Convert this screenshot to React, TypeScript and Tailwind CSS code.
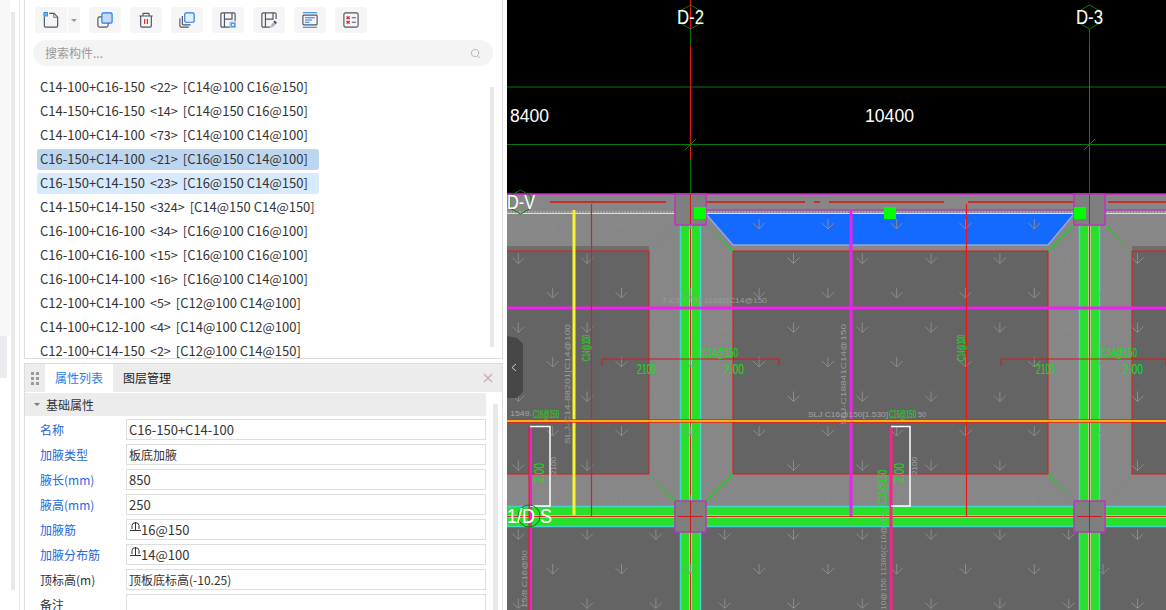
import React from "react";
import { Search } from "lucide-react";

const FONT = "font-['Noto_Sans_CJK_SC','Noto_Sans',sans-serif]";

const rows = [
  ["C14-100+C16-150", "<22>", "[C14@100 C16@150]"],
  ["C14-150+C16-150", "<14>", "[C14@150 C16@150]"],
  ["C14-100+C14-100", "<73>", "[C14@100 C14@100]"],
  ["C16-150+C14-100", "<21>", "[C16@150 C14@100]"],
  ["C16-150+C14-150", "<23>", "[C16@150 C14@150]"],
  ["C14-150+C14-150", "<324>", "[C14@150 C14@150]"],
  ["C16-100+C16-100", "<34>", "[C16@100 C16@100]"],
  ["C16-100+C16-100", "<15>", "[C16@100 C16@100]"],
  ["C16-100+C14-100", "<16>", "[C16@100 C14@100]"],
  ["C12-100+C14-100", "<5>", "[C12@100 C14@100]"],
  ["C14-100+C12-100", "<4>", "[C14@100 C12@100]"],
  ["C12-100+C14-150", "<2>", "[C12@100 C14@150]"],
];

const props: { label: string; value: string; rebar?: boolean; plain?: boolean; zh?: boolean }[] = [
  { label: "名称", value: "C16-150+C14-100" },
  { label: "加腋类型", value: "板底加腋", zh: true },
  { label: "腋长(mm)", value: "850" },
  { label: "腋高(mm)", value: "250" },
  { label: "加腋筋", value: "16@150", rebar: true },
  { label: "加腋分布筋", value: "14@100", rebar: true },
  { label: "顶标高(m)", value: "顶板底标高(-10.25)", plain: true, zh: true },
  { label: "备注", value: "", plain: true },
];

function Ico({ children }: { children: React.ReactNode }) {
  return (
    <svg width="16" height="16" viewBox="0 0 18 18" fill="none" stroke="#4d5566" strokeWidth="1.3">
      {children}
    </svg>
  );
}

const icons = [
  // copy
  <Ico key="a">
    <rect x="1" y="5.5" width="11.500" height="11.500" rx="2" />
    <rect x="5.500" y="1" width="11.500" height="11.500" rx="1.500" fill="#c5d9f3" stroke="#1c7cf0" />
  </Ico>,
  // delete
  <Ico key="b">
    <path d="M1.500 4.500h15M5.500 4.500V2.500a1 1 0 0 1 1-1h5a1 1 0 0 1 1 1v2M3 4.500v11a1.500 1.500 0 0 0 1.500 1.500h9a1.500 1.500 0 0 0 1.500-1.500v-11" />
    <path d="M7.500 8v5.500M10.500 8v5.500" stroke="#e02020" />
  </Ico>,
  // stacked
  <Ico key="c">
    <path d="M1 7v8.500a1.500 1.500 0 0 0 1.500 1.500H11" />
    <path d="M3.800 4.500v9a1 1 0 0 0 1 1H13" />
    <rect x="6.500" y="1" width="10.500" height="10.500" rx="1.500" fill="#e6f0fb" stroke="#1c7cf0" />
  </Ico>,
  // save to
  <Ico key="d">
    <path d="M11 17H2.500A1.500 1.500 0 0 1 1 15.500v-13A1.500 1.500 0 0 1 2.500 1h13A1.500 1.500 0 0 1 17 2.500V10" />
    <path d="M5 1v16M5 8h8.500V1" />
    <rect x="11.500" y="11.500" width="6" height="6" fill="#5a9df0" stroke="#8fbdf5" />
    <rect x="13.500" y="13.500" width="2" height="2" fill="#fff" stroke="none" />
  </Ico>,
  // pick
  <Ico key="e">
    <path d="M10 17H2.500A1.500 1.500 0 0 1 1 15.500v-13A1.500 1.500 0 0 1 2.500 1h13A1.500 1.500 0 0 1 17 2.500V8" />
    <path d="M5 1v16M5 8h8.500V1" />
    <path d="M10.500 17.500l1-3 3-3 2 2-3 3z" fill="#a9aeb9" stroke="#c5c9d1" strokeWidth="1" />
    <path d="M14 11l1.500-1.500 2.500 2.500-1.500 1.500z" fill="#3d4452" stroke="none" />
  </Ico>,
  // list
  <Ico key="f">
    <path d="M1 0.800h16M1 17.200h16" stroke="#1c7cf0" />
    <rect x="1" y="3.500" width="16" height="11" rx="1" />
    <path d="M3.500 6.500h11M3.500 9h8M3.500 11.500h5" stroke="#1c7cf0" />
  </Ico>,
  // errors
  <Ico key="g">
    <rect x="1" y="1" width="16" height="16" rx="2" />
    <path d="M4 5l3.500 3M7.500 5L4 8M4 10l3.500 3M7.500 10L4 13" stroke="#e02020" strokeWidth="1.500" />
    <path d="M10 6.500h4.500M10 11.500h4.500" />
  </Ico>,
];

function NewIcon() {
  return (
    <svg width="16" height="16" viewBox="0 0 18 18" fill="none">
      <path d="M1.500 5v10.500A1.500 1.500 0 0 0 3 17h12a1.500 1.500 0 0 0 1.500-1.500V6l-4-4.500H7" stroke="#4d5566" strokeWidth="1.300" />
      <path d="M12 1.500v4.500h4.500z" fill="#dfe2e8" stroke="#4d5566" strokeWidth="0.800" />
      <rect x="0.500" y="0" width="5" height="5" fill="#2f7fe6" />
      <path d="M1.500 1h1v1h-1zM3.500 1h1v1h-1zM2.500 2h1v1h-1zM1.500 3h1v1h-1zM3.500 3h1v1h-1z" fill="#cfe3fb" />
    </svg>
  );
}

function RebarMark() {
  return (
    <svg width="13" height="13" viewBox="0 0 13 13" fill="none" stroke="#333" strokeWidth="1" className="mt-[-5px] mr-[-1px]">
      <path d="M1 9.500h11M6.500 1v8.500M3 8V4.500a3.500 2.800 0 0 1 7 0V8" />
    </svg>
  );
}

function Arrows() {
  const out: React.ReactNode[] = [];
  for (let r = 0; r < 12; r++) {
    const y = 224 + r * 34.5;
    const x0 = r % 2 === 0 ? 552.7 : 518.3;
    for (let x = x0; x < 1170; x += 68.8) {
      out.push(<path key={`${r}-${x}`} d={`M${x} ${y - 5}v10M${x - 6} ${y - 1}l6 6l6-6`} />);
    }
  }
  return (
    <g stroke="#8c8c8c" strokeWidth="1" fill="none">
      {out}
    </g>
  );
}

function Hex({ cx, cy, r }: { cx: number; cy: number; r: number }) {
  const h = r * 0.87;
  return (
    <path
      d={`M${cx} ${cy - r}L${cx + h} ${cy - r / 2}V${cy + r / 2}L${cx} ${cy + r}L${cx - h} ${cy + r / 2}V${cy - r / 2}Z`}
      fill="none"
      stroke="#0a7a0a"
      strokeWidth="1"
    />
  );
}

function Beam({ x }: { x: number }) {
  return (
    <g>
      <rect x={x} y={224} width={21} height={386} fill="#2adf2a" />
      <path d={`M${x + 0.5} 224V610M${x + 20.5} 224V610`} stroke="#3fd8c8" strokeWidth="1.500" />
      <path d={`M${x + 10.5} 224V610`} stroke="#f0c0b0" strokeWidth="2.500" />
      <path d={`M${x + 10.5} 224V610`} stroke="#e02020" strokeWidth="1" />
    </g>
  );
}

function Column({ x, y }: { x: number; y: number }) {
  return <rect x={x} y={y} width={31} height={31} fill="#7f7f7f" stroke="#c030c0" strokeWidth="1.500" />;
}

function Dim({ x, end }: { x: number; end: number }) {
  return (
    <g>
      <path d={`M${x} 366v-7H${end}v7`} stroke="#d01818" fill="none" />
      <text x={x + 100} y={357} fontSize="13" fill="#12e012" textLength={36} lengthAdjust="spacingAndGlyphs">C14@150</text>
      <text x={x + 35} y={374} fontSize="15" fill="#12e012" textLength={19} lengthAdjust="spacingAndGlyphs">2100</text>
      <text x={x + 122} y={374} fontSize="15" fill="#12e012" textLength={20} lengthAdjust="spacingAndGlyphs">2.00</text>
    </g>
  );
}

function Vtext({ x, y, len, size, fill, children }: { x: number; y: number; len: number; size: number; fill: string; children: string }) {
  return (
    <text transform={`translate(${x} ${y}) rotate(-90)`} fontSize={size} fill={fill} textLength={len} lengthAdjust="spacingAndGlyphs">
      {children}
    </text>
  );
}

function Canvas() {
  return (
    <svg width="659" height="610" viewBox="507 0 659 610" className="block font-['Liberation_Sans',sans-serif]">
      <rect x="507" y="0" width="659" height="610" fill="#000" />

      {/* axes */}
      <path d="M507 87H1166" stroke="#065006" strokeWidth="1.500" />
      <path d="M507 144.500H1166" stroke="#067a06" />
      <path d="M690.500 0V160M1089.500 45V160" stroke="#e01818" />
      <path d="M690.500 29V45M690.500 160V194M1089.500 29V45M1089.500 160V194" stroke="#087008" />
      <path d="M685 150l11-11M1084 150l11-11" stroke="#0a8a0a" />
      <Hex cx={690.500} cy={17} r={12} />
      <Hex cx={1089.500} cy={17} r={12} />
      <text x={677} y={24} fontSize="20" fill="#fff" textLength={27} lengthAdjust="spacingAndGlyphs">D-2</text>
      <text x={1076} y={24} fontSize="20" fill="#fff" textLength={27} lengthAdjust="spacingAndGlyphs">D-3</text>
      <text x={510} y={122} fontSize="18" fill="#fff" textLength={39} lengthAdjust="spacingAndGlyphs">8400</text>
      <text x={865} y={122} fontSize="18" fill="#fff" textLength={49} lengthAdjust="spacingAndGlyphs">10400</text>

      {/* slab */}
      <rect x="507" y="194" width="659" height="416" fill="#878787" />
      <rect x="507" y="246" width="142" height="5" fill="#6e6e6e" />
      <rect x="1132" y="246" width="34" height="5" fill="#6e6e6e" />
      <rect x="507" y="251" width="142" height="223" fill="#646464" />
      <rect x="733" y="251" width="315" height="223" fill="#646464" />
      <rect x="1132" y="251" width="34" height="223" fill="#646464" />
      <rect x="507" y="527" width="659" height="83" fill="#646464" />
      <path d="M706 214H1074L1048 245H733Z" fill="#1469ff" />
      <path d="M706 214L733 245H1048L1074 214" fill="none" stroke="#8fa8e0" strokeWidth="1.500" />

      {/* beams */}
      <Beam x={680} />
      <Beam x={1079} />
      <rect x="507" y="506" width="659" height="21" fill="#2adf2a" />
      <path d="M507 506.500H1166M507 526.500H1166" stroke="#3fd8c8" strokeWidth="1.500" />
      <path d="M507 516.500H1166" stroke="#f0c0b0" strokeWidth="2.500" />
      <path d="M507 516.500H1166" stroke="#e02020" />

      <Arrows />

      {/* top band */}
      <path d="M550 202H666M690 202H805M814 202H820M829 202H944M968 202H1073M1108 202H1166" stroke="#c43030" strokeWidth="2" />
      <path d="M507 194H1166" stroke="#d81fd8" strokeWidth="1.500" />
      <path d="M675 210H1166" stroke="#b040b0" strokeWidth="1.500" />
      <path d="M507 212H1166" stroke="#bbb" strokeDasharray="2 1" />
      <path d="M507 213.500H1166" stroke="#f0f040" />
      <Column x={675} y={194} />
      <Column x={1074} y={194} />
      <Column x={675} y={501} />
      <Column x={1074} y={501} />
      <path d="M690.500 194V224M1089.500 194V224M690.500 501V532M1089.500 501V532M678 516.500H703M1077 516.500H1102" stroke="#d01818" />

      {/* chamfers */}
      <path d="M675 225L649 251M706 225L733 251M1074 225L1048 251M1105 225L1132 251M649 474L675 501M733 474L706 501M1048 474L1074 501M1132 474L1105 501" stroke="#18d018" />

      {/* slab lines */}
      <path d="M507 251H649M733 251H1048M1132 251H1166M507 474H649M733 474H1048M1132 474H1166M649 251V474M733 251V474M1048 251V474M1132 251V474" stroke="#e01818" />
      <path d="M507 308H1166" stroke="#f020f0" strokeWidth="3" />
      <rect x="572.500" y="210" width="3" height="305" fill="#f4f430" />
      <path d="M591.500 204V516M966.500 204V516" stroke="#f01414" strokeWidth="1.200" />
      <rect x="849.500" y="210" width="3" height="306" fill="#f020f0" />
      <path d="M507 421H1166" stroke="#f02010" strokeWidth="3.500" />
      <path d="M507 421H1166" stroke="#ffe010" strokeWidth="1.500" />
      <rect x="529" y="427" width="3" height="183" fill="#f020d0" />
      <path d="M529 427V610" stroke="#e01818" />
      <rect x="889.500" y="427" width="3" height="183" fill="#ff1f8f" />
      <path d="M530 426.500H550V506H530M891 426.500H910V506H891" fill="none" stroke="#fff" strokeWidth="1.500" />

      {/* grips */}
      <rect x="694" y="207" width="12" height="12" fill="#00ff00" />
      <rect x="884" y="207" width="12" height="12" fill="#00ff00" />
      <rect x="1074" y="207" width="12" height="12" fill="#00ff00" />

      {/* dims and labels */}
      <Dim x={602} end={779} />
      <Dim x={1001} end={1166} />
      <Vtext x={590} y={361} len={26} size={11} fill="#12e012">C14@100</Vtext>
      <Vtext x={965} y={361} len={26} size={11} fill="#12e012">C14@100</Vtext>
      <text x={662} y={303} fontSize="8" fill="#9c9c9c" textLength={105} lengthAdjust="spacingAndGlyphs">T-C14-150 11885[C14@150</text>
      <Vtext x={570} y={444} len={120} size={8} fill="#9c9c9c">SLJ-C14-88201[C14@100</Vtext>
      <Vtext x={846} y={425} len={101} size={8} fill="#9c9c9c">SLJ-C18841C14@150</Vtext>
      <text x={808} y={417} fontSize="8" fill="#a4a4a4" textLength={80} lengthAdjust="spacingAndGlyphs">SLJ C16@150[1.530]</text>
      <text x={918} y={417} fontSize="8" fill="#a4a4a4" textLength={8} lengthAdjust="spacingAndGlyphs">50</text>
      <text x={510} y={416} fontSize="8" fill="#a4a4a4" textLength={22} lengthAdjust="spacingAndGlyphs">1549.</text>
      <text x={533} y={418} fontSize="10" fill="#12e012" textLength={26} lengthAdjust="spacingAndGlyphs">C16@150</text>
      <text x={889} y={418} fontSize="10" fill="#12e012" textLength={27} lengthAdjust="spacingAndGlyphs">C16@150</text>
      <Vtext x={544} y={483} len={20} size={15} fill="#12e012">2.00</Vtext>
      <Vtext x={904} y={483} len={20} size={15} fill="#12e012">2.00</Vtext>
      <Vtext x={556} y={475} len={18} size={8} fill="#a4a4a4">2100</Vtext>
      <Vtext x={917} y={475} len={18} size={8} fill="#a4a4a4">2100</Vtext>
      <Vtext x={887} y={505} len={35} size={13} fill="#12e012">C10@150</Vtext>
      <Vtext x={527} y={608} len={58} size={8} fill="#9c9c9c">15/8 C16@50</Vtext>
      <Vtext x={886} y={610} len={98} size={8} fill="#9c9c9c">10@150 11386(C10@150</Vtext>

      {/* axis bubbles on the slab */}
      <Hex cx={520.500} cy={202} r={12} />
      <text x={507} y={209} fontSize="20" fill="#fff" textLength={28} lengthAdjust="spacingAndGlyphs">D-V</text>
      <circle cx="529" cy="516" r="11" fill="none" stroke="#0a7a0a" />
      <text x={507} y={523} fontSize="20" fill="#fff" textLength={45} lengthAdjust="spacingAndGlyphs">1/D S</text>

      {/* collapse handle */}
      <path d="M507 336L517 338L523 344V392L517 398H507Z" fill="#474747" />
      <path d="M516 364l-4 3.500l4 3.500" fill="none" stroke="#ccc" />
    </svg>
  );
}

export default function App() {
  return (
    <div className={`flex h-[610px] w-[1166px] overflow-hidden bg-white text-[#333] ${FONT}`}>
      {/* left rail */}
      <div className="relative flex w-[24px] shrink-0">
        <div className="flex w-[19px] justify-end bg-white pt-[12px] pr-[4px] pb-[20px]">
          <div className="w-[4px] bg-[#e9e9e9]" />
        </div>
        <div className="w-[5px] border-l border-[#e2e2e2] bg-white" />
        <div className="absolute top-0 left-0 h-[336px] w-[10px] bg-[#f7f8fa]" />
        <div className="absolute top-[336px] left-0 h-[42px] w-[7px] bg-[#ececf0]" />
      </div>

      {/* main panel */}
      <div className="flex w-[479px] shrink-0 flex-col">
        <div className="relative h-[359px] shrink-0 overflow-hidden border-x border-b border-[#dcdcdc]">
          <div className="flex gap-[9px] pt-[7px] pl-[10px]">
            <div className="flex h-[26px] gap-[1px]">
              <div className="flex w-[32px] items-center justify-center rounded-l-[4px] bg-[#f5f5f5]">
                <NewIcon />
              </div>
              <div className="flex w-[12px] items-center justify-center rounded-r-[4px] bg-[#f5f5f5]">
                <div className="h-0 w-0 border-x-[3px] border-t-[3px] border-x-transparent border-t-[#999]" />
              </div>
            </div>
            {icons.map((ic, i) => (
              <div key={i} className="flex h-[26px] w-[32px] items-center justify-center rounded-[4px] bg-[#f5f5f5]">
                {ic}
              </div>
            ))}
          </div>

          <div className="mt-[7px] mr-[9px] ml-[8px] flex h-[26px] items-center justify-between rounded-full bg-[#f4f4f4] pr-[12px] pl-[12px]">
            <span className="text-[12px] text-[#999]">搜索构件...</span>
            <Search size={11} strokeWidth={2} className="text-[#b5b5b5]" />
          </div>

          <div className="mt-[9px] flex flex-col">
            {rows.map((r, i) => (
              <div key={i} className="flex h-[24px] items-center">
                <div
                  className={`ml-[12px] flex h-[21px] items-center rounded-[3px] pr-[11px] pl-[3px] text-[13px] whitespace-pre ${
                    i === 3 ? "bg-[#bdd6ef]" : i === 4 ? "bg-[#d7e9fd]" : ""
                  }`}
                >
                  {r[0]}
                  <span className="mx-[5px] text-[12.500px]">{r[1]}</span>
                  {r[2]}
                </div>
              </div>
            ))}
          </div>

          <div className="absolute top-[87px] right-[8px] h-[260px] w-[4px] bg-[#e8e8e8]" />
        </div>

        <div className="mt-[4px] flex min-h-0 flex-1 flex-col border-x border-t border-[#dcdcdc]">
          <div className="flex h-[28px] shrink-0 items-stretch bg-[#ececec]">
            <div className="flex w-[20px] items-center justify-center">
              <div className="grid grid-cols-2 gap-[2px]">
                {[0, 1, 2, 3, 4, 5].map((d) => (
                  <div key={d} className="h-[3px] w-[3px] bg-[#999]" />
                ))}
              </div>
            </div>
            <div className="flex w-[68px] items-center justify-center bg-white text-[12px] text-[#2b7de9]">属性列表</div>
            <div className="ml-[10px] flex items-center text-[12px] text-[#222]">图层管理</div>
            <div className="ml-auto flex items-center pr-[9px] text-[#c9a9a9]">
              <svg width="10" height="10" viewBox="0 0 10 10" stroke="currentColor" strokeWidth="1.200">
                <path d="M1 1l8 8M9 1l-8 8" />
              </svg>
            </div>
          </div>

          <div className="relative flex-1">
            <div className="mt-[1px] flex h-[23px] w-[461px] items-center bg-[#ececec] pl-[9px] text-[12px]">
              <div className="mr-[6px] h-0 w-0 border-x-[3px] border-t-[3px] border-x-transparent border-t-[#777]" />
              基础属性
            </div>
            <div className="mt-[3px] flex flex-col gap-[4px]">
              {props.map((p) => (
                <div key={p.label} className="flex h-[21px] w-[461px] items-center">
                  <div className={`w-[101px] shrink-0 pl-[15px] text-[12px] ${p.plain ? "text-[#333]" : "text-[#2568e0]"}`}>
                    {p.label}
                  </div>
                  <div className={`flex h-[21px] flex-1 items-center border border-[#dedede] pl-[2px] ${p.zh ? "text-[12px]" : "text-[13px]"}`}>
                    {p.rebar && <RebarMark />}
                    {p.value}
                  </div>
                </div>
              ))}
            </div>
            <div className="absolute top-[12px] right-[4px] bottom-0 w-[5px] bg-[#e8e8e8]" />
          </div>
        </div>
      </div>

      <div className="w-[4px] shrink-0 bg-white" />

      <div className="relative min-w-0 flex-1 overflow-hidden">
        <Canvas />
      </div>
    </div>
  );
}
